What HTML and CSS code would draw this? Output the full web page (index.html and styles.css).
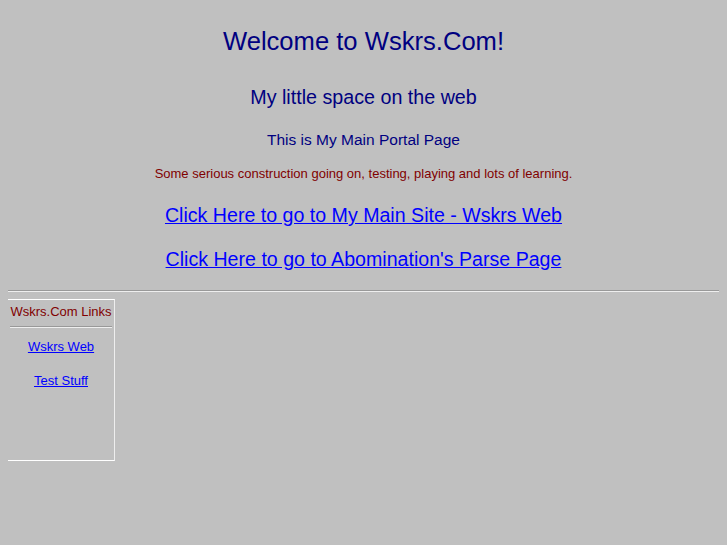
FILE: index.html
```html
<!DOCTYPE html>
<html lang="en">

<head>
    <meta charset="UTF-8">
    <title>Wskrs.Com</title>
    <link rel="stylesheet" href="styles.css">
</head>

<body>
    <div class="intro">
        <h1 class="welcome">Welcome to Wskrs.Com!</h1>
        <p class="tagline">My little space on the web</p>
        <p class="portal">This is My Main Portal Page</p>
        <p class="notice">Some serious construction going on, testing, playing and lots of learning.</p>
        <p class="big-link"><a href="#">Click Here to go to My Main Site - Wskrs Web</a></p>
        <p class="big-link"><a href="#">Click Here to go to Abomination's Parse Page</a></p>
    </div>
    <hr class="divider">
    <table class="links">
        <tr>
            <td>
                <div class="links-title">Wskrs.Com Links</div>
                <hr class="links-rule">
                <p><a href="#">Wskrs Web</a></p>
                <p class="second"><a href="#">Test Stuff</a></p>
            </td>
        </tr>
    </table>
</body>

</html>
```

FILE: styles.css
```css
body {
    margin: 8px;
    background-color: #c0c0c0;
    font-family: "Liberation Sans", Arial, sans-serif;
}

.intro {
    text-align: center;
}

.welcome {
    margin: 18px 0 0;
    font-size: 25.6px;
    font-weight: normal;
    line-height: 30px;
    color: #000080;
}

.tagline {
    margin: 29px 0 0;
    font-size: 19.7px;
    line-height: 24px;
    color: #000080;
}

.portal {
    margin: 22px 0 0;
    font-size: 15.5px;
    line-height: 18px;
    color: #000080;
}

.notice {
    margin: 17px 0 0;
    font-size: 13px;
    line-height: 16px;
    color: #800000;
}

.big-link {
    margin: 21px 0 0;
    font-size: 19.6px;
    line-height: 24px;
}

.big-link + .big-link {
    margin-top: 20px;
}

a {
    color: #0000ff;
}

.divider {
    margin: 19px 0 0;
    border: 0;
    border-top: 1px solid #999;
    border-bottom: 1px solid #eee;
}

.links {
    margin: 7px 0 0 -1px;
    width: 108px;
    height: 162px;
    border-collapse: separate;
    border-spacing: 0;
    border: 1px solid #fff;
    border-right-color: #eee;
    text-align: center;
}

.links td {
    vertical-align: top;
    padding: 4px 2px;
    font-size: 13px;
    line-height: 15px;
    white-space: nowrap;
}

.links-title {
    color: #800000;
}

.links-rule {
    margin: 7px 0 0;
    border: 0;
    border-top: 1px solid #999;
    border-bottom: 1px solid #eee;
}

.links p {
    margin: 11px 0 0;
}

.links .second {
    margin-top: 19px;
}
```
